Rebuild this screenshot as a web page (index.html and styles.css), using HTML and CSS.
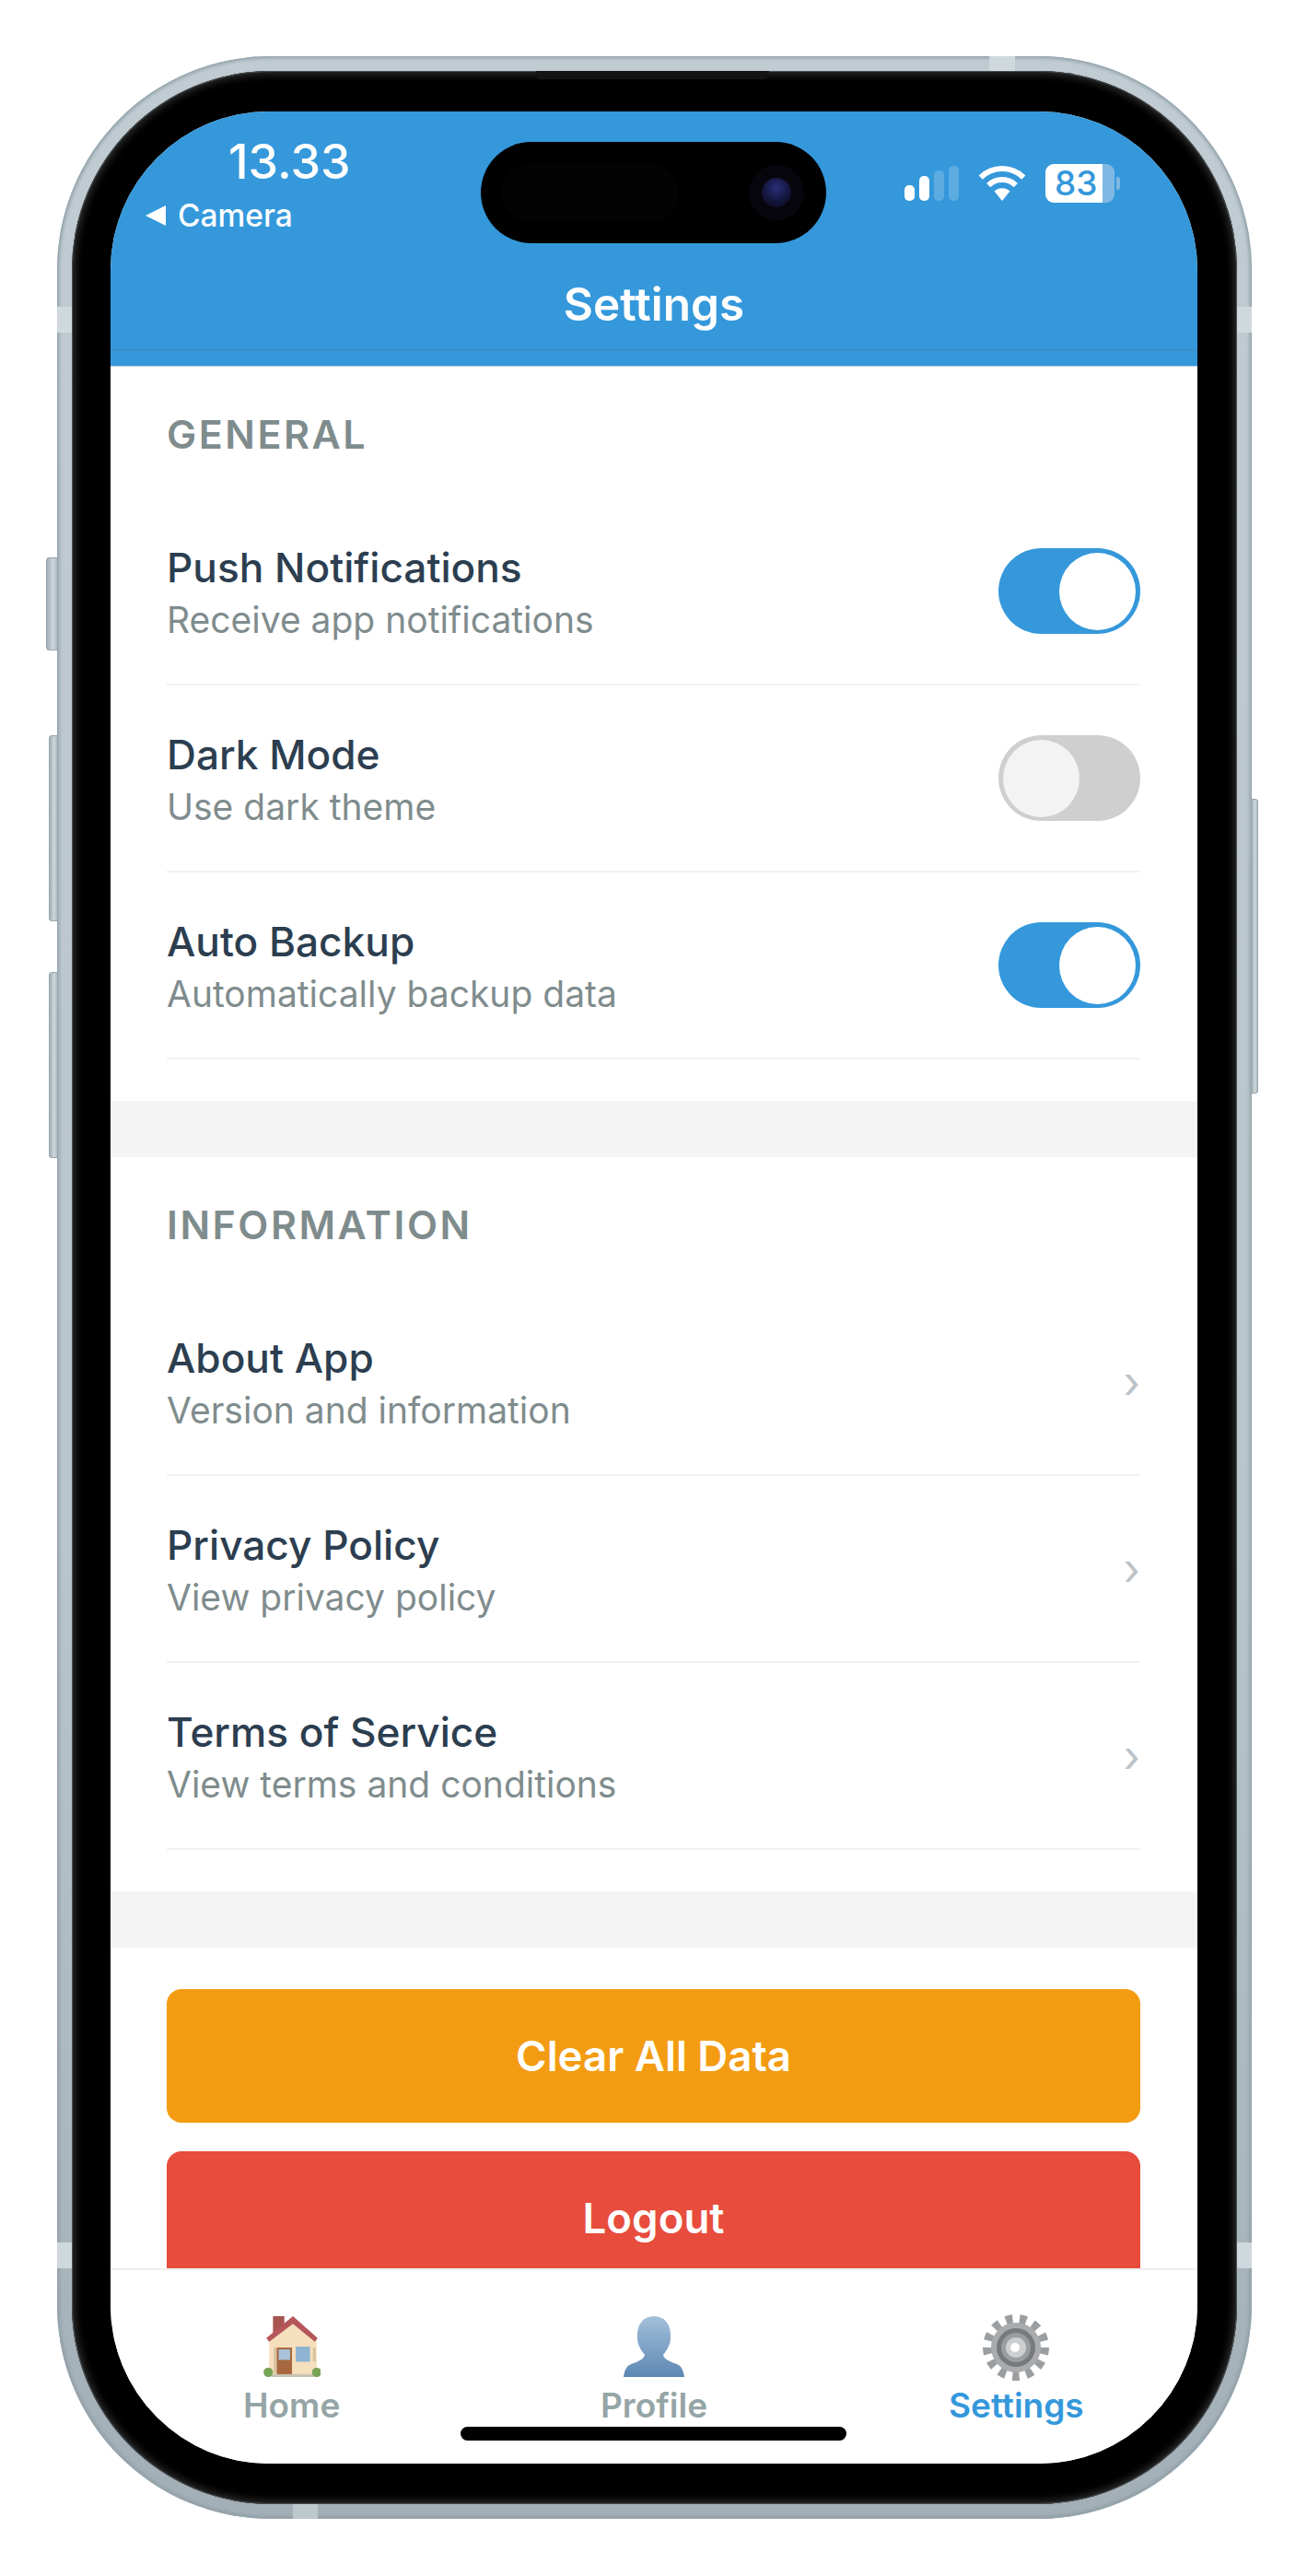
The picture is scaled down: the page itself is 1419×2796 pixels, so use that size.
FILE: index.html
```html
<!DOCTYPE html>
<html lang="en">
<head>
    <meta charset="UTF-8">
    <meta name="viewport" content="width=device-width, initial-scale=1.0">
    <title>Settings</title>
    <link rel="stylesheet" href="styles.css">
</head>
<body>
    <div class="phone">
        <span class="side-btn mute"></span>
        <span class="side-btn vol-up"></span>
        <span class="side-btn vol-down"></span>
        <span class="side-btn power"></span>
        <span class="band band-top"></span>
        <span class="band band-left-top"></span>
        <span class="band band-right-top"></span>
        <span class="band band-left-bottom"></span>
        <span class="band band-right-bottom"></span>
        <span class="band band-bottom"></span>

        <div class="bezel">
            <span class="speaker"></span>
            <div class="screen">
                <div class="island">
                    <span class="sensor"></span>
                    <span class="lens"></span>
                </div>

                <header class="header">
                    <div class="title-wrap">
                        <div class="status-bar">
                            <div class="status-left">
                                <div class="time">13.33</div>
                                <div class="back-app"><span class="back-arrow"></span>Camera</div>
                            </div>
                            <div class="status-right">
                                <div class="signal">
                                    <span class="bar b1"></span>
                                    <span class="bar b2"></span>
                                    <span class="bar b3"></span>
                                    <span class="bar b4"></span>
                                </div>
                                <svg class="wifi" viewBox="0 0 52 38">
                                    <path d="M2.7 12.7A33 33 0 0 1 49.3 12.7M11.2 21.2A21 21 0 0 1 40.8 21.2" fill="none" stroke="#fff" stroke-width="6"/>
                                    <path d="M26 38L17.5 27.5A12.5 12.5 0 0 1 34.5 27.5Z" fill="#fff"/>
                                </svg>
                                <div class="battery">
                                    <span class="battery-level">83</span>
                                    <span class="battery-knob"></span>
                                </div>
                            </div>
                        </div>
                        <h1 class="page-title">Settings</h1>
                    </div>
                </header>

                <main class="content">
                    <section class="section">
                        <h2 class="section-title">GENERAL</h2>
                        <div class="row">
                            <div class="row-text">
                                <div class="row-title">Push Notifications</div>
                                <div class="row-sub">Receive app notifications</div>
                            </div>
                            <div class="toggle on"><span class="thumb"></span></div>
                        </div>
                        <div class="row">
                            <div class="row-text">
                                <div class="row-title">Dark Mode</div>
                                <div class="row-sub">Use dark theme</div>
                            </div>
                            <div class="toggle"><span class="thumb"></span></div>
                        </div>
                        <div class="row">
                            <div class="row-text">
                                <div class="row-title">Auto Backup</div>
                                <div class="row-sub">Automatically backup data</div>
                            </div>
                            <div class="toggle on"><span class="thumb"></span></div>
                        </div>
                    </section>

                    <section class="section">
                        <h2 class="section-title">INFORMATION</h2>
                        <div class="row">
                            <div class="row-text">
                                <div class="row-title">About App</div>
                                <div class="row-sub">Version and information</div>
                            </div>
                            <span class="chevron">›</span>
                        </div>
                        <div class="row">
                            <div class="row-text">
                                <div class="row-title">Privacy Policy</div>
                                <div class="row-sub">View privacy policy</div>
                            </div>
                            <span class="chevron">›</span>
                        </div>
                        <div class="row">
                            <div class="row-text">
                                <div class="row-title">Terms of Service</div>
                                <div class="row-sub">View terms and conditions</div>
                            </div>
                            <span class="chevron">›</span>
                        </div>
                    </section>

                    <div class="actions">
                        <button class="action-btn clear">Clear All Data</button>
                        <button class="action-btn logout">Logout</button>
                    </div>
                </main>

                <nav class="tab-bar">
                    <a class="tab">
                        <svg class="tab-icon home-icon" viewBox="0 0 60 64">
                            <rect x="10" y="0" width="12" height="18" fill="#a8554f"/>
                            <path d="M6 24L31 4L56 24V62H6Z" fill="#f6dfbd"/>
                            <path d="M3 23L31 0L57 23L54 27L31 8L6 27Z" fill="#b5565a"/>
                            <rect x="11" y="33" width="3" height="27" fill="#d9c2a0"/>
                            <rect x="52" y="33" width="3" height="15" fill="#d9c2a0"/>
                            <rect x="14" y="33" width="16" height="29" fill="#a8683f"/>
                            <rect x="16" y="35" width="12" height="11" fill="#a9c3da"/>
                            <rect x="34" y="32" width="15" height="16" fill="#8fb3d2"/>
                            <rect x="8" y="61" width="46" height="3" fill="#c9c2b4"/>
                            <circle cx="5" cy="59" r="5" fill="#78a457"/>
                            <circle cx="56" cy="59" r="5" fill="#78a457"/>
                        </svg>
                        <span class="tab-label">Home</span>
                    </a>
                    <a class="tab">
                        <svg class="tab-icon bust-icon" viewBox="0 0 66 66">
                            <defs>
                                <linearGradient id="bustFill" x1="0" y1="0" x2="0" y2="1">
                                    <stop offset="0" stop-color="#a3bfd9"/>
                                    <stop offset="1" stop-color="#5d88b4"/>
                                </linearGradient>
                            </defs>
                            <path d="M33 0C46 0 52 11 51 24C50.500 32 47 37 43 42C44 47 50 49 58 52C63 54 65 59 66 66H0C1 59 3 54 8 52C16 49 22 47 23 42C19 37 15.500 32 15 24C14 11 20 0 33 0Z" fill="url(#bustFill)"/>
                        </svg>
                        <span class="tab-label">Profile</span>
                    </a>
                    <a class="tab active">
                        <svg class="tab-icon gear-icon" viewBox="0 0 72 72">
                            <circle cx="36" cy="36" r="31" fill="none" stroke="#9b9ea1" stroke-width="10" stroke-dasharray="7.490 7.490"/>
                            <circle cx="36" cy="36" r="27" fill="#a9abad"/>
                            <circle cx="36" cy="36" r="21" fill="#77797c"/>
                            <circle cx="36" cy="36" r="16" fill="#9b9d9f"/>
                            <circle cx="36" cy="36" r="11" fill="#cdcfd1"/>
                            <circle cx="35" cy="36" r="5" fill="#fff"/>
                        </svg>
                        <span class="tab-label">Settings</span>
                    </a>
                </nav>

                <span class="home-indicator"></span>
            </div>
        </div>
    </div>
</body>
</html>
```

FILE: styles.css
```css
/* Reset default styles */
* {
    margin: 0;
    padding: 0;
    box-sizing: border-box;
}

body {
    background: #ffffff;
    font-family: 'Inter', 'Liberation Sans', sans-serif;
    padding: 61px 0 0 62px;
}

/* Device frame */
.phone {
    position: relative;
    width: 1297px;
    height: 2673px;
    padding: 16px;
    border-radius: 232px;
    background: linear-gradient(180deg, #c0ccd2 0%, #b8c5cb 60%, #a3afb6 100%);
    box-shadow: inset 0 0 0 1px #98a6ae, inset 0 0 3px 3px rgba(130, 145, 155, 0.5);
}

.bezel {
    position: relative;
    height: 100%;
    padding: 44px 43px 44px 42px;
    border-radius: 216px;
    background: #000000;
    box-shadow: inset 0 0 0 1px #4b5055, inset 0 0 10px 3px #333333;
}

.speaker {
    position: absolute;
    top: 0;
    left: 504px;
    width: 253px;
    height: 9px;
    border-radius: 0 0 5px 5px;
    background: #141414;
}

.side-btn {
    position: absolute;
    background: linear-gradient(90deg, #a0aeb6, #ced8dc 60%, #adb9c0);
    border: 1px solid #98a6ae;
}

.mute {
    left: -12px;
    top: 544px;
    width: 13px;
    height: 101px;
    border-radius: 3px 0 0 3px;
}

.vol-up {
    left: -9px;
    top: 737px;
    width: 10px;
    height: 202px;
    border-radius: 3px 0 0 3px;
}

.vol-down {
    left: -9px;
    top: 994px;
    width: 10px;
    height: 202px;
    border-radius: 3px 0 0 3px;
}

.power {
    right: -7px;
    top: 806px;
    width: 8px;
    height: 320px;
    border-radius: 0 3px 3px 0;
}

/* Antenna bands on the frame */
.band {
    position: absolute;
    background: #cfd8dc;
}

.band-top {
    top: 0;
    left: 1012px;
    width: 28px;
    height: 16px;
}

.band-left-top,
.band-right-top,
.band-left-bottom,
.band-right-bottom {
    width: 16px;
    height: 28px;
}

.band-left-top {
    left: 0;
    top: 272px;
}

.band-right-top {
    right: 0;
    top: 272px;
}

.band-left-bottom {
    left: 0;
    top: 2373px;
}

.band-right-bottom {
    right: 0;
    top: 2373px;
}

.band-bottom {
    bottom: 0;
    left: 256px;
    width: 27px;
    height: 16px;
    background: #bdc8cd;
}

/* Screen */
.screen {
    position: relative;
    height: 100%;
    display: flex;
    flex-direction: column;
    overflow: hidden;
    border-radius: 172px;
    background: #ffffff;
}

.island {
    position: absolute;
    top: 33px;
    left: 402px;
    width: 375px;
    height: 110px;
    display: flex;
    justify-content: space-between;
    align-items: center;
    padding: 0 38px 0 22px;
    border-radius: 55px;
    background: #000000;
}

.sensor {
    width: 193px;
    height: 63px;
    border-radius: 32px;
    background: #030303;
}

.lens {
    width: 32px;
    height: 32px;
    border-radius: 50%;
    background: radial-gradient(circle at 50% 35%, #2b2f7a 0, #12143a 55%, #0b0b1c 100%);
    box-shadow: 0 0 0 14px #07060d;
}

/* Blue header with the status bar */
.header {
    background: #3498db;
    color: #ffffff;
    padding-bottom: 16px;
    border-bottom: 1px solid #b4cfe0;
}

.title-wrap {
    border-bottom: 2px solid #3a8fc9;
    padding-bottom: 19px;
}

.status-bar {
    display: flex;
    justify-content: space-between;
    height: 179px;
    padding: 28px 84px 0 38px;
}

.time {
    padding-left: 90px;
    font-size: 52px;
    font-weight: 500;
    line-height: 54px;
}

.back-app {
    display: flex;
    align-items: center;
    gap: 13px;
    margin-top: 12px;
    font-size: 33.500px;
    font-weight: 500;
    line-height: 38px;
}

.back-arrow {
    width: 0;
    height: 0;
    border-top: 11px solid transparent;
    border-bottom: 11px solid transparent;
    border-right: 22px solid #ffffff;
}

.status-right {
    display: flex;
    align-items: center;
    gap: 21px;
    height: 42px;
    margin-top: 29px;
}

.signal {
    display: flex;
    align-items: flex-end;
    gap: 5px;
    height: 38px;
}

.bar {
    width: 11px;
    border-radius: 5px;
    background: #ffffff;
}

.b1 {
    height: 17px;
}

.b2 {
    height: 27px;
}

.b3 {
    height: 33px;
    opacity: 0.2;
}

.b4 {
    height: 38px;
    opacity: 0.2;
}

.wifi {
    width: 52px;
    height: 38px;
}

.battery {
    display: flex;
    align-items: center;
    gap: 2px;
}

.battery-level {
    width: 75px;
    height: 42px;
    border-radius: 9px;
    background: linear-gradient(90deg, #ffffff 83%, #7fb9e3 83%);
    color: #3498db;
    font-size: 37px;
    font-weight: 500;
    line-height: 42px;
    padding-left: 10px;
}

.battery-knob {
    width: 4px;
    height: 14px;
    border-radius: 0 3px 3px 0;
    background: #7fb9e3;
}

.page-title {
    height: 60px;
    text-align: center;
    font-size: 49.500px;
    font-weight: 600;
    line-height: 60px;
}

.content {
    flex: 1;
    overflow: hidden;
    background: #ffffff;
}

.section {
    padding: 46px 62px 45px 61px;
    border-bottom: 61px solid #f4f4f4;
}

.section-title {
    height: 54px;
    margin-bottom: 43px;
    color: #7f8c8d;
    font-size: 43px;
    font-weight: 600;
    line-height: 54px;
    letter-spacing: 2.500px;
}

.row {
    display: flex;
    align-items: center;
    justify-content: space-between;
    height: 203px;
    border-bottom: 2px solid #f2f2f2;
}

.row-text {
    padding-top: 4px;
}

.row-title {
    color: #2c3e50;
    font-size: 44.200px;
    font-weight: 500;
    line-height: 56px;
}

.row-sub {
    margin-top: 2px;
    color: #7f8c8d;
    font-size: 39px;
    line-height: 54px;
}

/* Switches */
.toggle {
    display: flex;
    align-items: center;
    width: 154px;
    height: 93px;
    padding: 0 5px;
    border-radius: 47px;
    background: #cfcfcf;
}

.toggle.on {
    justify-content: flex-end;
    background: #3498db;
}

.thumb {
    width: 83px;
    height: 84px;
    border-radius: 50%;
    background: #f4f3f4;
}

.toggle.on .thumb {
    background: #ffffff;
}

.chevron {
    color: #bdc3c7;
    font-size: 48px;
    line-height: 44px;
}

/* Action buttons */
.actions {
    display: flex;
    flex-direction: column;
    gap: 31px;
    padding: 45px 62px 0 61px;
}

.action-btn {
    display: block;
    flex: none;
    width: 100%;
    height: 145px;
    border: none;
    border-radius: 16px;
    color: #ffffff;
    font-family: inherit;
    font-size: 45.600px;
    font-weight: 600;
}

.clear {
    background: #f39c12;
}

.logout {
    background: #e74c3c;
}

/* Bottom tabs */
.tab-bar {
    display: flex;
    height: 212px;
    flex: none;
    padding: 50px 0 0;
    background: #ffffff;
    border-top: 2px solid #efefef;
}

.tab {
    flex: 1;
    display: flex;
    flex-direction: column;
    align-items: center;
    color: #95a5a6;
}

.tab.active {
    color: #3498db;
}

.tab-icon {
    display: block;
    height: 66px;
}

.home-icon {
    width: 62px;
}

.bust-icon {
    width: 66px;
}

.gear-icon {
    width: 72px;
    height: 72px;
    margin-top: -2px;
    margin-bottom: -4px;
}

.tab-label {
    margin-top: 9px;
    font-size: 37px;
    font-weight: 600;
    line-height: 44px;
}

.home-indicator {
    position: absolute;
    left: 380px;
    bottom: 25px;
    width: 419px;
    height: 15px;
    border-radius: 8px;
    background: #000000;
}
```
